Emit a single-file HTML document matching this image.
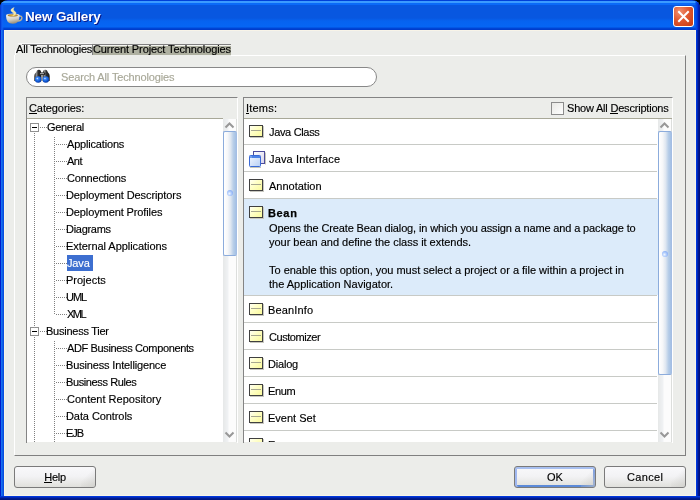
<!DOCTYPE html>
<html><head><meta charset="utf-8">
<style>
*{margin:0;padding:0;box-sizing:border-box}
html,body{width:700px;height:500px;overflow:hidden;background:#000}
body{position:relative;will-change:transform;font-family:"Liberation Sans",sans-serif;font-size:11px;color:#000;letter-spacing:-0.15px}
.a{position:absolute}
.t{position:absolute;white-space:nowrap;line-height:13px;-webkit-text-stroke:0.15px currentColor}
#frame{left:0;top:0;width:700px;height:500px;border-radius:8px 8px 0 0;overflow:hidden;
 background:linear-gradient(to right,#0018c8 0,#0020d0 1px,#1870f0 1px,#1870f0 2px,#0850e0 3px,#0850e0 4px,transparent 4px,transparent 696px,#0040e8 696px,#0030d0 697px,#0020a0 698px,#001080 699px)}
#title{left:0;top:0;width:700px;height:30px;
 background:linear-gradient(to bottom,#0040d8 0,#0040d8 1px,#3c9bff 1px,#3c9bff 3px,#0a6af8 3px,#0a6af8 5px,#0857e0 5px,#0857e0 18px,#0663f0 21px,#0666f4 27px,#0048d8 28px,#0038c8 30px)}
#client{left:4px;top:30px;width:692px;height:466px;background:#ecedea;border-left:1px solid #f8f4e8;border-top:1px solid #f8f4e8;border-right:1px solid #f8f4e8;border-bottom:1px solid #f8f4e8}
#bottomframe{left:0;top:496px;width:700px;height:4px;background:linear-gradient(to bottom,#0040e8 0,#0030d0 1px,#0020a0 2px,#001880 3px)}
.ttl{left:25px;top:7px;font-size:13.5px;font-weight:bold;color:#fff;letter-spacing:-0.15px;line-height:20px;text-shadow:1px 1px 0 #08188a;-webkit-text-stroke:0}
.panel{background:#ecedea}
.hdr{border:1px solid #8a8a8a;border-right:none;border-bottom:none}
.white{background:#fff}
.sep{position:absolute;left:0;height:1px;background:#c8cac6}
u{text-decoration:none;position:relative}
u:after{content:"";position:absolute;left:0;right:0;top:11px;height:1px;background:#000}
.btn{position:absolute;height:22px;border:1px solid #7a7a7a;border-radius:3px;background:linear-gradient(to bottom,#f8f8fa 0,#f3f3f5 45%,#ebebea 70%,#e0e0dc 100%);text-align:center;line-height:20px;letter-spacing:0;-webkit-text-stroke:0.15px #000}
.btn:after{content:"";position:absolute;right:0;top:0;width:14px;height:100%;background:linear-gradient(135deg,rgba(220,220,216,0) 40%,rgba(200,200,196,0.6) 100%);border-radius:0 2px 2px 0}

.ebox{position:absolute;left:30px;width:9px;height:9px;border:1px solid #909090;background:#fff}
.ebox:after{content:"";position:absolute;left:1px;top:3px;width:5px;height:1px;background:#000}
.hd{position:absolute;height:1px;background:repeating-linear-gradient(to right,#808080 0,#808080 1px,transparent 1px,transparent 2px)}
.vd{position:absolute;width:1px;background:repeating-linear-gradient(to bottom,#808080 0,#808080 1px,transparent 1px,transparent 2px)}

.icls{position:absolute;left:249px;width:14px;height:12px;border:1px solid #404040;background:linear-gradient(135deg,#fffff4 0,#ffffc8 40%,#fafa9c 100%);box-shadow:1px 1px 0 #c8c8c0}
.icls:after{content:"";position:absolute;left:1px;top:4px;width:10px;height:1px;background:#a8a890}
</style></head><body>
<div id="frame" class="a">
 <div id="title" class="a"></div>
 <div id="client" class="a"></div>
 <div id="bottomframe" class="a"></div>
 <div class="a" style="left:695px;top:0;width:5px;height:30px;background:linear-gradient(to right,rgba(0,64,224,0) 0,#0048e8 1px,#0040e0 2px,#0028c8 3px,#0018a0 4px)"></div>
 <div class="a" style="left:0;top:3px;width:4px;height:27px;background:linear-gradient(to right,#0030c8 0,#0848e0 1px,#1060f4 2px,rgba(16,96,244,0) 4px)"></div>
</div>
<svg width="0" height="0" style="position:absolute"><defs><linearGradient id="ibg" x1="0" y1="0" x2="1" y2="1"><stop offset="0" stop-color="#ffffff"/><stop offset="1" stop-color="#d8d4ec"/></linearGradient><linearGradient id="ifg" x1="0" y1="0" x2="1" y2="1"><stop offset="0" stop-color="#f4f8ff"/><stop offset="1" stop-color="#b8d0f4"/></linearGradient></defs></svg>
<svg class="a" style="left:2px;top:4px" width="24" height="24" viewBox="0 0 24 24">
 <defs>
  <linearGradient id="cupg" x1="0" y1="0" x2="0.3" y2="1"><stop offset="0" stop-color="#f4f4f0"/><stop offset="0.55" stop-color="#d4d2ca"/><stop offset="1" stop-color="#9c927c"/></linearGradient>
  <radialGradient id="cof" cx="0.5" cy="0.5" r="0.5"><stop offset="0" stop-color="#f0c040"/><stop offset="1" stop-color="#a07830"/></radialGradient>
 </defs>
 <path d="M16.8 12 Q20.6 11.6 19.8 14.8 Q19.2 16.8 15.8 17" fill="none" stroke="#b8b098" stroke-width="1.4"/>
 <path d="M4 11.2 Q4 19.8 10.8 19.8 Q17.6 19.8 17.6 11.2 Z" fill="url(#cupg)"/>
 <ellipse cx="10.8" cy="11.2" rx="6.8" ry="1.7" fill="#e4e2da"/>
 <ellipse cx="10.8" cy="11.4" rx="5" ry="1.1" fill="url(#cof)"/>
 <path d="M12.2 3.6 C8.6 4.8,8 6.8,10.4 8.2 C12.4 9.4,12.2 10.4,11 11.6 C14.8 10.6,14.6 8.4,12.6 7.2 C10.8 6.1,11.2 4.8,12.2 3.6Z" fill="#f6e8a8" stroke="#f8f0c0" stroke-width="0.4"/>
</svg>

<div class="t ttl">New Gallery</div>
<div class="a" style="left:673px;top:6px;width:21px;height:21px;border:1px solid #fff;border-radius:3px;background:radial-gradient(circle at 30% 25%,#f09070 0,#e05830 45%,#c83a10 100%)"></div>
<svg class="a" style="left:673px;top:6px" width="21" height="21"><path d="M6 6 L15 15 M15 6 L6 15" stroke="#fff" stroke-width="2" stroke-linecap="square"/></svg>
<div class="a" style="left:18px;top:43px;width:74px;height:1px;background:#f8f8f8"></div><div class="a" style="left:22px;top:44px;width:70px;height:1px;background:#8c8c8c"></div><div class="a" style="left:22px;top:45px;width:70px;height:1px;background:#fafafa"></div><div class="a" style="left:15px;top:50px;width:1px;height:6px;background:#fff"></div>
<div class="t" style="left:16px;top:43px;letter-spacing:-0.200px;">All Technologies</div>
<div class="a" style="left:92px;top:44px;width:139px;height:11px;background:#aeb0a0;border-left:1px solid #808080;border-top:1px solid #808080;box-shadow:inset 0 1px 0 #f4f4f0"></div>
<div class="t" style="left:93px;top:43px;letter-spacing:-0.111px;">Current Project Technologies</div>
<div class="a" style="left:14px;top:55px;width:672px;height:401px;border-left:1px solid #fff;border-top:1px solid #fff;border-right:1px solid #808080;border-bottom:1px solid #808080"></div>
<div class="a" style="left:15px;top:55px;width:216px;height:1px;background:#ecedea"></div>
<div class="a" style="left:26px;top:67px;width:351px;height:20px;border:1px solid #888;border-radius:10px;background:#fff"></div>
<svg class="a" style="left:32px;top:67px" width="20" height="20" viewBox="0 0 20 20">
 <defs>
  <linearGradient id="bar" x1="0" y1="0" x2="1" y2="0"><stop offset="0" stop-color="#202020"/><stop offset="0.3" stop-color="#8a8a8a"/><stop offset="0.55" stop-color="#303030"/><stop offset="1" stop-color="#181818"/></linearGradient>
  <radialGradient id="lens" cx="0.4" cy="0.35" r="0.65"><stop offset="0" stop-color="#5aa0ff"/><stop offset="0.6" stop-color="#1462e0"/><stop offset="1" stop-color="#0838a0"/></radialGradient>
 </defs>
 <path d="M2.3 14 L2.3 9 Q2.3 6.5 4 5.5 L5 3.4 Q5.8 2.6 7.2 2.8 Q8.6 3 9 4.5 L9.6 7 L9.6 14 Z" fill="url(#bar)"/>
 <path d="M17.7 14 L17.7 9 Q17.7 6.5 16 5.5 L15 3.4 Q14.2 2.6 12.8 2.8 Q11.4 3 11 4.5 L10.4 7 L10.4 14 Z" fill="url(#bar)"/>
 <rect x="6.5" y="5.5" width="7" height="2.4" rx="1" fill="#2a2a2a"/>
 <rect x="8" y="6.2" width="4" height="0.9" fill="#b8b8b8"/>
 <circle cx="6.2" cy="12.5" r="3.3" fill="url(#lens)"/>
 <circle cx="13.8" cy="12.5" r="3.3" fill="url(#lens)"/>
 <circle cx="5.3" cy="11.5" r="0.7" fill="#c8e0ff"/>
 <circle cx="12.9" cy="11.5" r="0.7" fill="#c8e0ff"/>
 <rect x="9.75" y="8" width="0.5" height="8" fill="#e8e8e8"/>
</svg>

<div class="t" style="left:61px;top:71px;letter-spacing:-0.136px;color:#a8a898">Search All Technologies</div>
<div class="a" style="left:26px;top:97px;width:212px;height:346px;border-left:1px solid #848484;border-top:1px solid #848484;border-right:1px solid #fff"></div>
<div class="a" style="left:27px;top:118px;width:196px;height:1px;background:#a8a898"></div>
<div class="t" style="left:29px;top:102px;letter-spacing:-0.100px;"><u>C</u>ategories:</div>
<div class="a white" style="left:27px;top:119px;width:196px;height:323px"></div>
<div class="a" style="left:27px;top:119px;width:196px;height:323px;overflow:hidden"><div class="a" style="left:-27px;top:-119px;width:240px;height:460px">
<div class="vd" style="left:34px;top:133px;height:194px"></div>
<div class="vd" style="left:34px;top:337px;height:106px"></div>
<div class="vd" style="left:54px;top:137px;height:178px"></div>
<div class="vd" style="left:54px;top:341px;height:102px"></div>
<div class="ebox" style="top:123px"></div>
<div class="hd" style="left:40px;top:127px;width:7px"></div>
<div class="t" style="left:47px;top:121px;letter-spacing:-0.333px;">General</div>
<div class="hd" style="left:56px;top:144px;width:11px"></div>
<div class="t" style="left:67px;top:138px;letter-spacing:-0.182px;">Applications</div>
<div class="hd" style="left:56px;top:161px;width:11px"></div>
<div class="t" style="left:67px;top:155px;letter-spacing:-0.500px;">Ant</div>
<div class="hd" style="left:56px;top:178px;width:11px"></div>
<div class="t" style="left:67px;top:172px;letter-spacing:-0.200px;">Connections</div>
<div class="hd" style="left:56px;top:195px;width:11px"></div>
<div class="t" style="left:66px;top:189px;letter-spacing:-0.095px;">Deployment Descriptors</div>
<div class="hd" style="left:56px;top:212px;width:11px"></div>
<div class="t" style="left:66px;top:206px;letter-spacing:-0.111px;">Deployment Profiles</div>
<div class="hd" style="left:56px;top:229px;width:11px"></div>
<div class="t" style="left:66px;top:223px;letter-spacing:-0.286px;">Diagrams</div>
<div class="hd" style="left:56px;top:246px;width:11px"></div>
<div class="t" style="left:66px;top:240px;letter-spacing:-0.050px;">External Applications</div>
<div class="hd" style="left:56px;top:263px;width:11px"></div>
<div class="a" style="left:67px;top:255px;width:26px;height:16px;background:#3d6fd0"></div>
<div class="t" style="left:67px;top:257px;letter-spacing:-0.150px;color:#fff">Java</div>
<div class="hd" style="left:56px;top:280px;width:11px"></div>
<div class="t" style="left:66px;top:274px;letter-spacing:0.000px;">Projects</div>
<div class="hd" style="left:56px;top:297px;width:11px"></div>
<div class="t" style="left:66px;top:291px;letter-spacing:-1.000px;">UML</div>
<div class="hd" style="left:56px;top:314px;width:11px"></div>
<div class="t" style="left:67px;top:308px;letter-spacing:-1.500px;">XML</div>
<div class="ebox" style="top:327px"></div>
<div class="hd" style="left:40px;top:331px;width:7px"></div>
<div class="t" style="left:46px;top:325px;letter-spacing:-0.250px;">Business Tier</div>
<div class="hd" style="left:56px;top:348px;width:11px"></div>
<div class="t" style="left:67px;top:342px;letter-spacing:-0.364px;">ADF Business Components</div>
<div class="hd" style="left:56px;top:365px;width:11px"></div>
<div class="t" style="left:66px;top:359px;letter-spacing:-0.150px;">Business Intelligence</div>
<div class="hd" style="left:56px;top:382px;width:11px"></div>
<div class="t" style="left:66px;top:376px;letter-spacing:-0.385px;">Business Rules</div>
<div class="hd" style="left:56px;top:399px;width:11px"></div>
<div class="t" style="left:67px;top:393px;letter-spacing:0.000px;">Content Repository</div>
<div class="hd" style="left:56px;top:416px;width:11px"></div>
<div class="t" style="left:66px;top:410px;letter-spacing:-0.083px;">Data Controls</div>
<div class="hd" style="left:56px;top:433px;width:11px"></div>
<div class="t" style="left:66px;top:427px;letter-spacing:-1.000px;">EJB</div>
</div></div>
<div class="a" style="left:243px;top:97px;width:430px;height:346px;border-left:1px solid #848484;border-top:1px solid #848484;border-right:1px solid #fff"></div>
<div class="a" style="left:244px;top:118px;width:428px;height:1px;background:#a8a898"></div>
<div class="t" style="left:246px;top:102px;letter-spacing:0.200px;"><u>I</u>tems:</div>
<div class="a" style="left:551px;top:102px;width:13px;height:13px;border:1px solid #8c8c8c;background:linear-gradient(135deg,#e8e8e4,#fff)"></div>
<div class="t" style="left:567px;top:102px;letter-spacing:-0.200px;">Show All <u>D</u>escriptions</div>
<div class="a white" style="left:244px;top:119px;width:414px;height:323px"></div>
<div class="a" style="left:244px;top:119px;width:414px;height:323px;overflow:hidden"><div class="a" style="left:-244px;top:-119px;width:700px;height:460px">
<div class="a" style="left:244px;top:199px;width:414px;height:96px;background:#dcebfa"></div>
<div class="sep" style="left:244px;top:144px;width:413px"></div>
<div class="sep" style="left:244px;top:171px;width:413px"></div>
<div class="sep" style="left:244px;top:198px;width:413px"></div>
<div class="sep" style="left:244px;top:295px;width:413px"></div>
<div class="sep" style="left:244px;top:322px;width:413px"></div>
<div class="sep" style="left:244px;top:349px;width:413px"></div>
<div class="sep" style="left:244px;top:376px;width:413px"></div>
<div class="sep" style="left:244px;top:403px;width:413px"></div>
<div class="sep" style="left:244px;top:430px;width:413px"></div>
<div class="icls" style="top:125px"></div>
<div class="t" style="left:269px;top:126px;letter-spacing:-0.333px;">Java Class</div>
<svg class="a" style="left:249px;top:151px" width="17" height="17" viewBox="0 0 17 17"><rect x="16" y="1.5" width="1" height="12" fill="#c8c8b8"/><rect x="4.5" y="0.5" width="11" height="12" fill="url(#ibg)" stroke="#4c4c9c"/><rect x="1" y="16" width="11" height="1" fill="#c8c8b8"/><rect x="0.5" y="4.5" width="11" height="11" rx="0.8" fill="url(#ifg)" stroke="#3a6ad6"/><rect x="1" y="5" width="10" height="2" fill="#4c82e6"/><rect x="1.5" y="5.5" width="1" height="1" fill="#e8f0ff"/></svg>

<div class="t" style="left:269px;top:153px;letter-spacing:0.154px;">Java Interface</div>
<div class="icls" style="top:179px"></div>
<div class="t" style="left:269px;top:180px;letter-spacing:0.000px;">Annotation</div>
<div class="icls" style="top:206px"></div>
<div class="t" style="left:268px;top:207px;letter-spacing:0.650px;font-weight:bold;-webkit-text-stroke:0.25px #000">Bean</div>
<div class="t" style="left:269px;top:222px;letter-spacing:-0.139px;">Opens the Create Bean dialog, in which you assign a name and a package to</div>
<div class="t" style="left:269px;top:236px;letter-spacing:-0.024px;">your bean and define the class it extends.</div>
<div class="t" style="left:269px;top:264px;letter-spacing:-0.013px;">To enable this option, you must select a project or a file within a project in</div>
<div class="t" style="left:269px;top:278px;letter-spacing:0.000px;">the Application Navigator.</div>
<div class="icls" style="top:303px"></div>
<div class="t" style="left:268px;top:304px;letter-spacing:0.143px;">BeanInfo</div>
<div class="icls" style="top:330px"></div>
<div class="t" style="left:269px;top:331px;letter-spacing:-0.444px;">Customizer</div>
<div class="icls" style="top:357px"></div>
<div class="t" style="left:268px;top:358px;letter-spacing:-0.200px;">Dialog</div>
<div class="icls" style="top:384px"></div>
<div class="t" style="left:268px;top:385px;letter-spacing:-0.333px;">Enum</div>
<div class="icls" style="top:411px"></div>
<div class="t" style="left:268px;top:412px;letter-spacing:0.000px;">Event Set</div>
<div class="icls" style="top:438px"></div>
<div class="t" style="left:268px;top:439px;letter-spacing:-0.150px;">E</div>
</div></div>
<div class="a" style="left:223px;top:119px;width:14px;height:323px;background:linear-gradient(to right,#e6e8e8 0,#f0f2f4 5px,#fcfcfc 6px,#fcfcfc 13px,#dcdedc 13px,#dcdedc 14px)"></div>
<div class="a" style="left:237px;top:119px;width:1px;height:323px;background:#fff"></div>
<svg class="a" style="left:223px;top:119px" width="14" height="12"><path d="M2.5 8.5 L6.5 4.5 L10.5 8.5" fill="none" stroke="#989898" stroke-width="2"/></svg>
<svg class="a" style="left:223px;top:430px" width="14" height="12"><path d="M2.5 2.5 L6.5 6.5 L10.5 2.5" fill="none" stroke="#989898" stroke-width="2"/></svg>
<div class="a" style="left:223px;top:131px;width:14px;height:125px;border:1px solid #8cacdc;border-right-color:#a4bee4;border-radius:2px;background:linear-gradient(to right,#ffffff 0,#f6f7f9 30%,#dfe7f1 55%,#b8cee8 78%,#a4c0e4 100%)"></div>
<div class="a" style="left:227px;top:190px;width:6px;height:6px;border-radius:50%;background:radial-gradient(circle at 40% 60%,#f0f6ff 0,#b0ccfc 40%,#8cb0f4 70%,rgba(140,176,244,0) 100%)"></div>
<div class="a" style="left:658px;top:119px;width:14px;height:323px;background:linear-gradient(to right,#e6e8e8 0,#f0f2f4 5px,#fcfcfc 6px,#fcfcfc 13px,#dcdedc 13px,#dcdedc 14px)"></div>
<div class="a" style="left:672px;top:119px;width:1px;height:323px;background:#fff"></div>
<svg class="a" style="left:658px;top:119px" width="14" height="12"><path d="M2.5 8.5 L6.5 4.5 L10.5 8.5" fill="none" stroke="#989898" stroke-width="2"/></svg>
<svg class="a" style="left:658px;top:430px" width="14" height="12"><path d="M2.5 2.5 L6.5 6.5 L10.5 2.5" fill="none" stroke="#989898" stroke-width="2"/></svg>
<div class="a" style="left:658px;top:131px;width:14px;height:244px;border:1px solid #8cacdc;border-right-color:#a4bee4;border-radius:2px;background:linear-gradient(to right,#ffffff 0,#f6f7f9 30%,#dfe7f1 55%,#b8cee8 78%,#a4c0e4 100%)"></div>
<div class="a" style="left:662px;top:251px;width:6px;height:6px;border-radius:50%;background:radial-gradient(circle at 40% 60%,#f0f6ff 0,#b0ccfc 40%,#8cb0f4 70%,rgba(140,176,244,0) 100%)"></div>
<div class="btn" style="left:14px;top:466px;width:82px;letter-spacing:-0.3px"><u>H</u>elp</div>
<div class="btn" style="left:514px;top:466px;width:82px;box-shadow:inset 0 2px 0 #a8c0f0,inset 2px 0 0 #a0b8f0,inset 0 -2px 0 #5c8ad8,inset -2px 0 0 #7c9ee0">OK</div>
<div class="btn" style="left:604px;top:466px;width:82px;letter-spacing:0.35px;text-indent:0.35px">Cancel</div>
</body></html>
